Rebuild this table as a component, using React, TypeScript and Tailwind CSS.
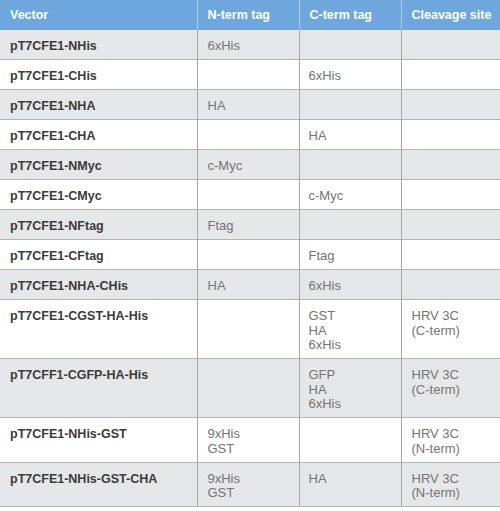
import React from "react";

type Row = { v: string; n: string[]; c: string[]; s: string[] };

const rows: Row[] = [
  { v: "pT7CFE1-NHis", n: ["6xHis"], c: [], s: [] },
  { v: "pT7CFE1-CHis", n: [], c: ["6xHis"], s: [] },
  { v: "pT7CFE1-NHA", n: ["HA"], c: [], s: [] },
  { v: "pT7CFE1-CHA", n: [], c: ["HA"], s: [] },
  { v: "pT7CFE1-NMyc", n: ["c-Myc"], c: [], s: [] },
  { v: "pT7CFE1-CMyc", n: [], c: ["c-Myc"], s: [] },
  { v: "pT7CFE1-NFtag", n: ["Ftag"], c: [], s: [] },
  { v: "pT7CFE1-CFtag", n: [], c: ["Ftag"], s: [] },
  { v: "pT7CFE1-NHA-CHis", n: ["HA"], c: ["6xHis"], s: [] },
  { v: "pT7CFE1-CGST-HA-His", n: [], c: ["GST", "HA", "6xHis"], s: ["HRV 3C", "(C-term)"] },
  { v: "pT7CFF1-CGFP-HA-His", n: [], c: ["GFP", "HA", "6xHis"], s: ["HRV 3C", "(C-term)"] },
  { v: "pT7CFE1-NHis-GST", n: ["9xHis", "GST"], c: [], s: ["HRV 3C", "(N-term)"] },
  { v: "pT7CFE1-NHis-GST-CHA", n: ["9xHis", "GST"], c: ["HA"], s: ["HRV 3C", "(N-term)"] },
];

function Lines({ items }: { items: string[] }) {
  return (
    <>
      {items.map((t, i) => (
        <div key={i}>{t}</div>
      ))}
    </>
  );
}

export default function App() {
  return (
    <div
      className="w-[500px] h-[511px] bg-white overflow-hidden"
      style={{ fontFamily: '"Liberation Sans", Arial, sans-serif' }}
    >
      <table className="w-[500px] border-collapse table-fixed">
        <colgroup>
          <col className="w-[197px]" />
          <col className="w-[102px]" />
          <col className="w-[102px]" />
          <col className="w-[99px]" />
        </colgroup>
        <thead>
          <tr className="bg-[#6ea7de] h-[30px]">
            <th className="text-left font-bold text-white text-[12.5px] leading-[15px] pl-[10px] pt-[1px] pb-0 border-r border-[#a9cbee]">
              Vector
            </th>
            <th className="text-left font-bold text-white text-[12.5px] leading-[15px] pl-[10px] pt-[1px] pb-0 border-r border-[#a9cbee]">
              N-term tag
            </th>
            <th className="text-left font-bold text-white text-[12.5px] leading-[15px] pl-[10px] pt-[1px] pb-0 border-r border-[#a9cbee]">
              C-term tag
            </th>
            <th className="text-left font-bold text-white text-[12.5px] leading-[15px] pl-[10px] pt-[1px] pb-0">
              Cleavage site
            </th>
          </tr>
        </thead>
        <tbody>
          {rows.map((r, i) => (
            <tr
              key={r.v}
              className={`${i % 2 === 0 ? "bg-[#e6e7e8]" : "bg-white"} border-b border-[#b4b4b4]`}
            >
              <td className="align-top pl-[10px] pt-[9px] pb-[5.5px] text-[12.5px] leading-[14.5px] font-bold text-[#3a3a3a] border-r border-[#a8a8a8]">
                {r.v}
              </td>
              <td className="align-top pl-[10px] pt-[9px] pb-[5.5px] text-[13px] leading-[14.5px] text-[#747474] border-r border-[#a8a8a8]">
                <Lines items={r.n} />
              </td>
              <td className="align-top pl-[9px] pt-[9px] pb-[5.5px] text-[13px] leading-[14.5px] text-[#747474] border-r border-[#a8a8a8]">
                <Lines items={r.c} />
              </td>
              <td className="align-top pl-[10px] pt-[9px] pb-[5.5px] text-[13px] leading-[14.5px] text-[#747474]">
                <Lines items={r.s} />
              </td>
            </tr>
          ))}
        </tbody>
      </table>
    </div>
  );
}
